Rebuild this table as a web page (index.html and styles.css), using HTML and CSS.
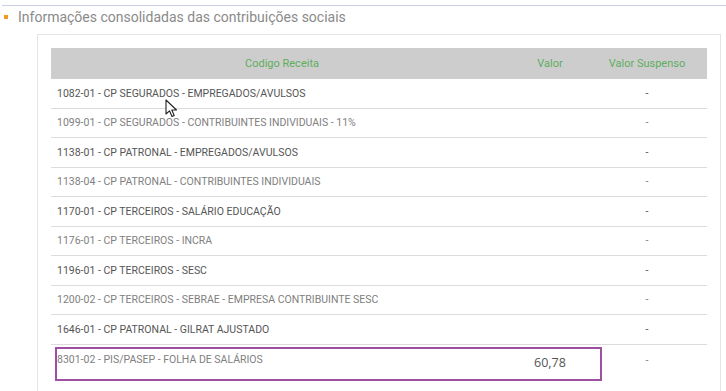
FILE: index.html
```html
<!DOCTYPE html>
<html lang="pt-BR">
<head>
<meta charset="utf-8">
<title>Informações consolidadas</title>
<link rel="stylesheet" href="styles.css">
</head>
<body>
<div class="page">
  <div class="topline"></div>
  <h2 class="title"><span class="bullet"></span>Informações consolidadas das contribuições sociais</h2>
  <div class="card">
    <div class="table">
      <div class="row head">
        <div class="c1">Codigo Receita</div>
        <div class="c2">Valor</div>
        <div class="c3">Valor Suspenso</div>
      </div>
      <div class="row dark"><div class="c1">1082-01 - CP SEGURADOS - EMPREGADOS/AVULSOS</div><div class="c2"></div><div class="c3">-</div></div>
      <div class="row light"><div class="c1">1099-01 - CP SEGURADOS - CONTRIBUINTES INDIVIDUAIS - 11%</div><div class="c2"></div><div class="c3">-</div></div>
      <div class="row dark"><div class="c1">1138-01 - CP PATRONAL - EMPREGADOS/AVULSOS</div><div class="c2"></div><div class="c3">-</div></div>
      <div class="row light"><div class="c1">1138-04 - CP PATRONAL - CONTRIBUINTES INDIVIDUAIS</div><div class="c2"></div><div class="c3">-</div></div>
      <div class="row dark"><div class="c1">1170-01 - CP TERCEIROS - SALÁRIO EDUCAÇÃO</div><div class="c2"></div><div class="c3">-</div></div>
      <div class="row light"><div class="c1">1176-01 - CP TERCEIROS - INCRA</div><div class="c2"></div><div class="c3">-</div></div>
      <div class="row dark"><div class="c1">1196-01 - CP TERCEIROS - SESC</div><div class="c2"></div><div class="c3">-</div></div>
      <div class="row light"><div class="c1">1200-02 - CP TERCEIROS - SEBRAE - EMPRESA CONTRIBUINTE SESC</div><div class="c2"></div><div class="c3">-</div></div>
      <div class="row dark"><div class="c1">1646-01 - CP PATRONAL - GILRAT AJUSTADO</div><div class="c2"></div><div class="c3">-</div></div>
      <div class="row light last"><div class="c1">8301-02 - PIS/PASEP - FOLHA DE SALÁRIOS</div><div class="c2 value">60,78</div><div class="c3">-</div><div class="highlight"></div></div>
    </div>
  </div>
  <svg class="cursor" width="13" height="19" viewBox="0 0 13 19"><path d="M1 1 L1 15 L4.5 11.8 L7 17.5 L9.2 16.5 L6.8 11 L11.5 11 Z" fill="#fff" stroke="#222" stroke-width="1.1" stroke-linejoin="round"/></svg>
</div>
</body>
</html>
```
FILE: styles.css
```css
html, body {
  margin: 0;
  padding: 0;
  background: #fff;
}
body {
  font-family: Roboto, "Liberation Sans", sans-serif;
}
.page {
  position: relative;
  width: 726px;
  height: 391px;
  overflow: hidden;
}
.topline {
  margin: 5px 0 0 2px;
  height: 1px;
  background: #c9cee2;
}
.title {
  margin: 0;
  display: flex;
  align-items: center;
  height: 19px;
  margin-top: 1px;
  padding-left: 4px;
  font-size: 14px;
  font-weight: 400;
  color: #8a8a8a;
}
.bullet {
  width: 4px;
  height: 4px;
  background: #f39a1e;
  margin-right: 10px;
}
.card {
  margin: 8px 5px 0 37px;
  border: 1px solid #e4e4e4;
  border-bottom: none;
  padding: 13px 13px 0 13px;
  height: 400px;
}
.table {
  display: flex;
  flex-direction: column;
}
.row {
  position: relative;
  display: grid;
  grid-template-columns: 462px 74px 1fr;
  align-items: center;
  height: 29.5px;
  box-sizing: border-box;
  border-bottom: 1px solid #dcdcdc;
  font-size: 10.5px;
}
.row.head {
  height: 31px;
  background: #cdcdcd;
  border-bottom: none;
  color: #5fae5f;
  font-size: 11px;
  text-align: center;
}
.row.dark { color: #555; }
.row.light { color: #808080; }
.row.last { border-bottom: none; }
.row .c1 { padding-left: 6px; }
.row.head .c1 { padding-left: 0; }
.row .c3 { text-align: center; }
.row .c2 { text-align: center; }
.value {
  font-family: "Open Sans", sans-serif;
  font-size: 12.5px;
  color: #555;
  padding-top: 7px;
}
.row.last .c3 { padding-top: 3px; }
.highlight {
  position: absolute;
  left: 4px;
  top: 2px;
  width: 547px;
  height: 34px;
  box-sizing: border-box;
  border: 2px solid #9d4fa0;
}
.cursor {
  position: absolute;
  left: 165px;
  top: 99px;
}
```
